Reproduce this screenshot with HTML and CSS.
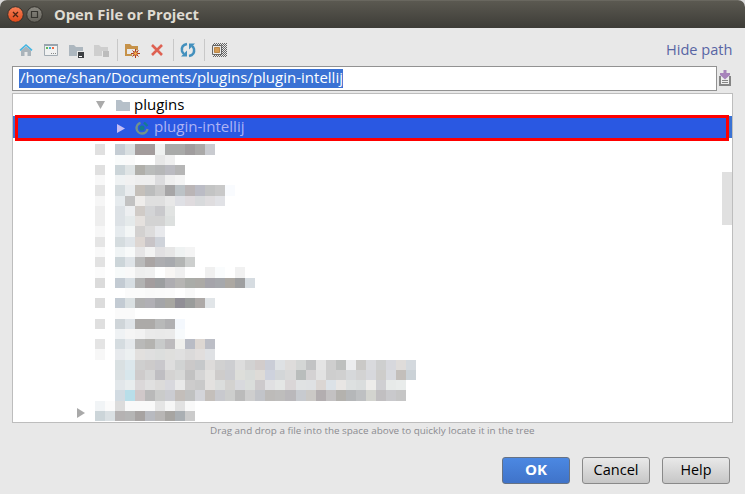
FILE: index.html
```html
<!DOCTYPE html>
<html lang="en">
<head>
<meta charset="utf-8">
<title>Open File or Project</title>
<link rel="stylesheet" href="styles.css">
</head>
<body>
<div class="dialog">
  <header class="titlebar">
    <svg class="winbtn" viewBox="0 0 17 17"><defs><linearGradient id="r" x2="0" y2="1"><stop stop-color="#f88158"/><stop offset="1" stop-color="#df4818"/></linearGradient><linearGradient id="g" x2="0" y2="1"><stop stop-color="#8c8a82"/><stop offset="1" stop-color="#63615a"/></linearGradient></defs><circle cx="8.5" cy="8.5" r="7.8" fill="url(#r)" stroke="#34322d"/><path d="M6 6l5 5M11 6l-5 5" stroke="#4b2414" stroke-width="1.3"/></svg>
    <svg class="winbtn" viewBox="0 0 17 17"><circle cx="8.5" cy="8.5" r="7.8" fill="url(#g)" stroke="#34322d"/><path d="M5.5 5.5h6v6h-6z" fill="none" stroke="#35342f" stroke-width="1.2"/></svg>
    <h1><svg class="label" width="146" height="24"><text x="0" y="17" textLength="145" lengthAdjust="spacingAndGlyphs">Open File or Project</text></svg></h1>
  </header>
  <main>
    <div class="toolbar">
      <svg class="icon" viewBox="0 0 16 16"><path d="M3 8.500l5-4 5 4V14H9.500v-4h-3v4H3z" fill="#a9b3ba"/><path d="M2 8.300l6-5.300 6 5.300" fill="none" stroke="#43b5e2" stroke-width="1.600"/></svg>
      <svg class="icon" viewBox="0 0 16 16"><path d="M1.500 2.500h13v11h-13z" fill="#f0f1f1" stroke="#a2abb2"/><path d="M1 2h14v2H1z" fill="#98a4ad"/><path d="M3 5h2v2H3z" fill="#62b75a"/><path d="M6 5h2v2H6z" fill="#3cafd9"/><path d="M9 5h2v2H9z" fill="#f26943"/><path d="M8 11h1v1H8zm2 0h1v1h-1zm2 0h1v1h-1z" fill="#888"/></svg>
      <svg class="icon" viewBox="0 0 16 16"><path d="M1 3h5l2 2h7v9H1z" fill="#adb7bf"/><path d="M9 9h8v8H9z" fill="#e8e8e8"/><path d="M10 10h6v6h-6z" fill="#3d4043"/><path d="M11 14h3v1h-3z" fill="#fff"/></svg>
      <svg class="icon" viewBox="0 0 16 16"><path d="M1 3h5l2 2h7v9H1z" fill="#cecece"/><path d="M9 9h8v8H9z" fill="#e8e8e8"/><path d="M10 9h6v6h-6z" fill="#bcbcbc"/></svg>
      <i class="sep"></i>
      <svg class="icon" viewBox="0 0 16 16"><path d="M1 2h5l2 2h6v10H1zM3 7v5h9V7z" fill="#c69249" fill-rule="evenodd"/><circle cx="11.500" cy="11.500" r="3.600" fill="#e8e8e8"/><path d="M11.500 7v9M7 11.500h9M8.500 8.500l6 6M14.500 8.500l-6 6" stroke="#b03a20"/><circle cx="11.500" cy="11.500" r="1.900" fill="#f5b04c" stroke="#b34a25"/></svg>
      <svg class="icon" viewBox="0 0 16 16"><path d="M3 3l10 10M13 3L3 13" stroke="#de6152" stroke-width="2.600"/></svg>
      <i class="sep"></i>
      <svg class="icon" viewBox="0 0 16 16"><path d="M7 2Q1 3 2 9q.5 2 2 3M9 14q6-1 5-7-.5-2-2-3" fill="none" stroke="#4390bd" stroke-width="2.500"/><path d="M1 14.500h6V8.500zM15 1.500H9v6z" fill="#4390bd"/></svg>
      <i class="sep"></i>
      <svg class="icon" viewBox="0 0 16 16"><defs><pattern id="p" width="2" height="2" patternUnits="userSpaceOnUse"><path d="M0 0h1v1H0zM1 1h1v1H1z" fill="#666"/></pattern></defs><path d="M2 1h14v14H2z" fill="url(#p)" shape-rendering="crispEdges"/><path d="M1.500 3.500h9v9h-9z" fill="#e8e8e8" stroke="#666"/><path d="M3.500 5.500h5v5h-5z" fill="#d49b55" stroke="#b98546"/></svg>
      <a class="hide"><svg class="label" width="67" height="20"><text x="0" y="15" textLength="66.500" lengthAdjust="spacingAndGlyphs">Hide path</text></svg></a>
    </div>
    <div class="pathrow">
      <div class="path"><span class="selected"><svg class="label" width="324" height="18"><text x="1" y="14" textLength="323" lengthAdjust="spacingAndGlyphs">/home/shan/Documents/plugins/plugin-intellij</text></svg></span></div>
      <svg class="history" viewBox="0 0 12 16"><path d="M1 6v9h10V6" fill="#eee" stroke="#858585" stroke-width="2"/><path d="M3 10.500h6M3 12.500h6" stroke="#858585"/><path d="M4.500 0h3v3H11v2L6 9.500 1 5V3h3.500z" fill="#a783bb"/></svg>
    </div>
    <div class="tree">
      <div class="row plugins"><svg class="arrow" viewBox="0 0 9 8"><path d="M0 0h9L4.500 8z" fill="#aaa"/></svg><svg class="folder" viewBox="0 0 14 12"><path d="M0 1h5l2 2h7v9H0z" fill="#b6c0c9"/></svg><svg class="label" width="52" height="20"><text x="0" y="15" textLength="50.500" lengthAdjust="spacingAndGlyphs">plugins</text></svg></div>
      <div class="row chosen"><div class="outline"><svg class="arrow2" viewBox="0 0 8 9"><path d="M0 0l8 4.500L0 9z" fill="#c6bdf5"/></svg><svg class="gradle" viewBox="0 0 14 14"><path d="M5.500 1.800A5.500 5.500 0 1 0 12.500 8" fill="none" stroke="#73938c" stroke-width="2.400"/><circle cx="7" cy="7" r="2.600" fill="#147a90"/><path d="M9 1.500l3.500 3.500" stroke="#147a90" stroke-width="2.400"/></svg><svg class="label" width="92" height="20"><text x="0" y="14" textLength="90.500" lengthAdjust="spacingAndGlyphs">plugin-intellij</text></svg></div></div>
      <div class="content"><svg class="arrow3" viewBox="0 0 8 10"><path d="M0 0l8 5-8 5z" fill="#a9a9a9"/></svg><div class="mosaic" id="mosaic"></div></div>
      <i class="thumb"></i>
    </div>
    <p class="hint"><svg class="label" width="326" height="14"><text x="0" y="9" textLength="324.500" lengthAdjust="spacingAndGlyphs">Drag and drop a file into the space above to quickly locate it in the tree</text></svg></p>
    <footer><button class="primary"><svg class="label" width="22" height="20"><text x="0" y="15" textLength="22" lengthAdjust="spacingAndGlyphs">OK</text></svg></button><button><svg class="label" width="46" height="20"><text x="0.500" y="15" textLength="45" lengthAdjust="spacingAndGlyphs">Cancel</text></svg></button><button><svg class="label" width="32" height="20"><text x="0.500" y="15" textLength="31" lengthAdjust="spacingAndGlyphs">Help</text></svg></button></footer>
  </main>
</div>
<script src="mosaic.js"></script>
</body>
</html>
```
FILE: styles.css
```css
* { box-sizing: border-box; }
body { margin: 0; width: 745px; height: 494px; overflow: hidden; background: #d9d9d9; font-family: "Open Sans", "Noto Sans", sans-serif; }
svg { display: block; flex: none; }
.label { overflow: visible; font-size: 14.400px; fill: currentColor; }
.dialog { height: 494px; background: #e8e8e8; border-radius: 7px 7px 0 0; overflow: hidden; }
.titlebar { height: 28px; display: flex; align-items: center; padding-left: 7px; background: linear-gradient(#5b5951, #3d3c37); border-top: 1px solid #69675f; }
.winbtn { width: 17px; height: 17px; margin-right: 2px; }
h1 { margin: 0 0 0 9px; color: #dfdbd2; }
h1 .label { font-weight: 700; }
main { padding: 0 12px; }
.toolbar { height: 38px; display: flex; align-items: center; padding: 6px 0 0 6px; }
.icon { width: 16px; height: 16px; margin-right: 9px; overflow: visible; }
.sep { width: 1px; height: 22px; background: #c8c8c8; margin: 0 6px 0 -1px; }
.hide { margin-left: auto; color: #5865a4; }
.pathrow { display: flex; height: 27px; align-items: flex-start; }
.path { width: 705px; height: 25px; border: 1px solid #929292; background: #fff; padding: 2px 6px; }
.selected { display: block; width: 324px; height: 19px; background: #3a72d4; color: #fff; }
.history { width: 12px; height: 16px; margin: 4px 0 0 2px; }
.tree { position: relative; height: 330px; border: 1px solid #bdbdbd; background: #fff; overflow: hidden; }
.row { display: flex; align-items: center; height: 22px; color: #111; }
.plugins { padding-left: 83px; color: #000; }
.arrow { width: 9px; height: 8px; margin-right: 11px; }
.folder { width: 14px; height: 12px; margin-right: 4px; }
.chosen { background: #3a72d4; color: #aeb3f4; padding-left: 2px; }
.outline { display: flex; align-items: center; flex: none; width: 714px; height: 26px; margin-top: 2px; border: 3px solid #f00; background: #2a58e2; padding-left: 99px; }
.arrow2 { width: 8px; height: 9px; margin-right: 10px; }
.gradle { width: 14px; height: 14px; margin: 0 5px 1px 0; }
.content { display: flex; padding: 6px 0 0 64px; }
.arrow3 { width: 8px; height: 10px; margin: 264px 9.600px 0 0; }
.mosaic { display: grid; grid-template-columns: repeat(32, 10.050px); grid-auto-rows: 10.260px; margin-top: 0.300px; }
.thumb { position: absolute; right: 0; top: 78px; width: 10px; height: 53px; background: #e0e0e0; }
.hint { margin: 0; height: 34px; padding: 2px 0 0 198px; color: #8b8b90; }
.hint .label { font-size: 9.700px; }
footer { display: flex; justify-content: flex-end; gap: 12px; padding-right: 3px; }
button { width: 68px; height: 27px; padding: 0 0 1px; display: flex; justify-content: center; align-items: center; border: 1px solid #898989; border-radius: 3px; background: linear-gradient(#e9e9e9, #c6c6c6); font-family: inherit; color: #000; }
.primary { background: linear-gradient(#4c88e2, #3f73c9); border-color: #667284; color: #fff; font-weight: 700; }
```
FILE: mosaic.js
```js
// One line per row of blurred entries: two digits are a grey, six a colour, a dot is empty.
const rows = `
e0 . c5cdd4 d9dfe1 a39c9c a39c9c eff1f0 a9aaa9 a9aaa9 a09d9e aaa9a8 c9cbd0
. . f9fbfb fa . . e7 ef
e0 . ccd5d9 dfe4e5 b0afaa babcbb b6b7b8 bbbbc1 b6
f8 . eff2f3 f1 ee ee dcdcde ef f4
e5 . d5dcdf e9ecee c5c0ba bcbdbd c9 a7a6a7 bcc2c6 bab5b6 bbbcc5 c3c4c4 c9 f9fbfe
f6 . e6ebee c2 efedeb df df e8 dfe0e5 dfdbde d8dadc dfdddf e1e2e6
ee . dde2e6 edeff1 d0cbc7 d3d4d6 c9c9cc e1e3e2
ee . dde2e6 e5eaeb e5e1de d3 d3 dde0df
f7 . e6ebee f3f6f6 d3d1d0 dddcdc e8e9ec
e5 . d5dcdf e0e5e9 ddd6d2 c8c4c7 cfd3da
f9 . f0f4f5 f8fafa e6e5e6 f3 e1e0e2 e6 eff2f2 f4
e2 . ccd5d9 dfe4e8 ba aaa5a4 adadb0 a8aaae b3b5b4 cdcfce
fb . f7fafa f9 ee f0 . f8f6f4 f0 . . f0 fafcfd . f1
db . c3cbd3 d7dee3 b2 a39d9e 9c9ea0 aeadb1 b6b5b3 aaaca8 acaaa6 a5a4aa a6a8ac aca8a2 9e9fa0 d6dce1
. . . fb fb f9 fa fb . f9
dc . c3cbd3 dae0e2 b0 b1b0b5 a4a5a8 a8a7a2 918f96 9a9c9b ada9a7 e1e5e8
. . fa fa
df . cfd5d9 dfe4e8 acaaa8 acaaa8 b8b9b9 b0b0b2 f4f8fd
. . eff2f4 f5 f2 ea e9 ea f7fafc
e4 . d5dce0 e5e9ec b9b9b8 b4b3b0 c8caca bdbbbd f0f0ed b9bcc5 ddd7d2 bcbec6
f7 . e7eaed ecf0f1 e2e0de df dcdedd dfdfdd e0 dbdada e1dedd dfe1e4
. . d9e0e2 dce7ec cf cdcbcb c9c8cc de d1d3d3 cbc9c9 c6c8ca dddbda d1 cdced1 dd d2 d2cccb cacdd7 dee1e4 dedcdb d4d6d5 c2c3c4 e4 ce bec0bf ecedef cac9c7 d9dadd cecfcf d7d8dd dfdcda d4d9de
. . dbe1e3 d8e7ec cecbcb d5 bfbec2 d4d3d2 d7d8d7 c2 d5 e2e1df cecccb cbccd0 dddeda d8dbd9 dedbd7 ced2dd d3d6d8 d9 b9bdbc d4d2d3 e2 ce d0 d6d8da d3 d7d8dc cecdcb d8dadf c3bfbb cbd2d7
. . e2e7ea e8edee dbd8d9 e0 dcdbda d8d8dd e9 cdcccc c9 e3e1df dbdddc d3d2d0 d8d9dd dadddb cdcacc e0e0e2 e4e6e5 dad6d7 e0e2e3 dfe1e3 dbd6d3 dce2e7 e8e6e4 dde0e0 dadddd edecea cfcfd2 e7eae9 e9eceb
. . d2dbe2 b8dee9 d0c8c9 b9 cacbca cbccd1 c3beba c0c1c1 d3d4d9 c4bfbb c8c9ce cdcecd bb ce c2c4c9 bdbbb9 bebdbc bab8bb c7cacf cbc9c6 b3aeb0 c3c1c2 b4b2ae b5b7b9 bec0c2 d3d4cf c1bfc1 c9c9cc c6
f1f4f6 fb dc f9 f9 f9 e5 f6 e2 f9
ccd5d9 dae0e3 b5b2b2 b5 a7a3a2 b8bac0 b8b6b5 a7a5a2 aaafb3 cb`.trim().split("\n");
const grid = document.getElementById("mosaic");
for (const row of rows) {
  const cells = row.split(" ");
  for (let i = 0; i < 32; i++) {
    const c = cells[i];
    const cell = document.createElement("i");
    if (c && c !== ".") cell.style.background = "#" + (c.length === 2 ? c.repeat(3) : c);
    grid.append(cell);
  }
}
```
